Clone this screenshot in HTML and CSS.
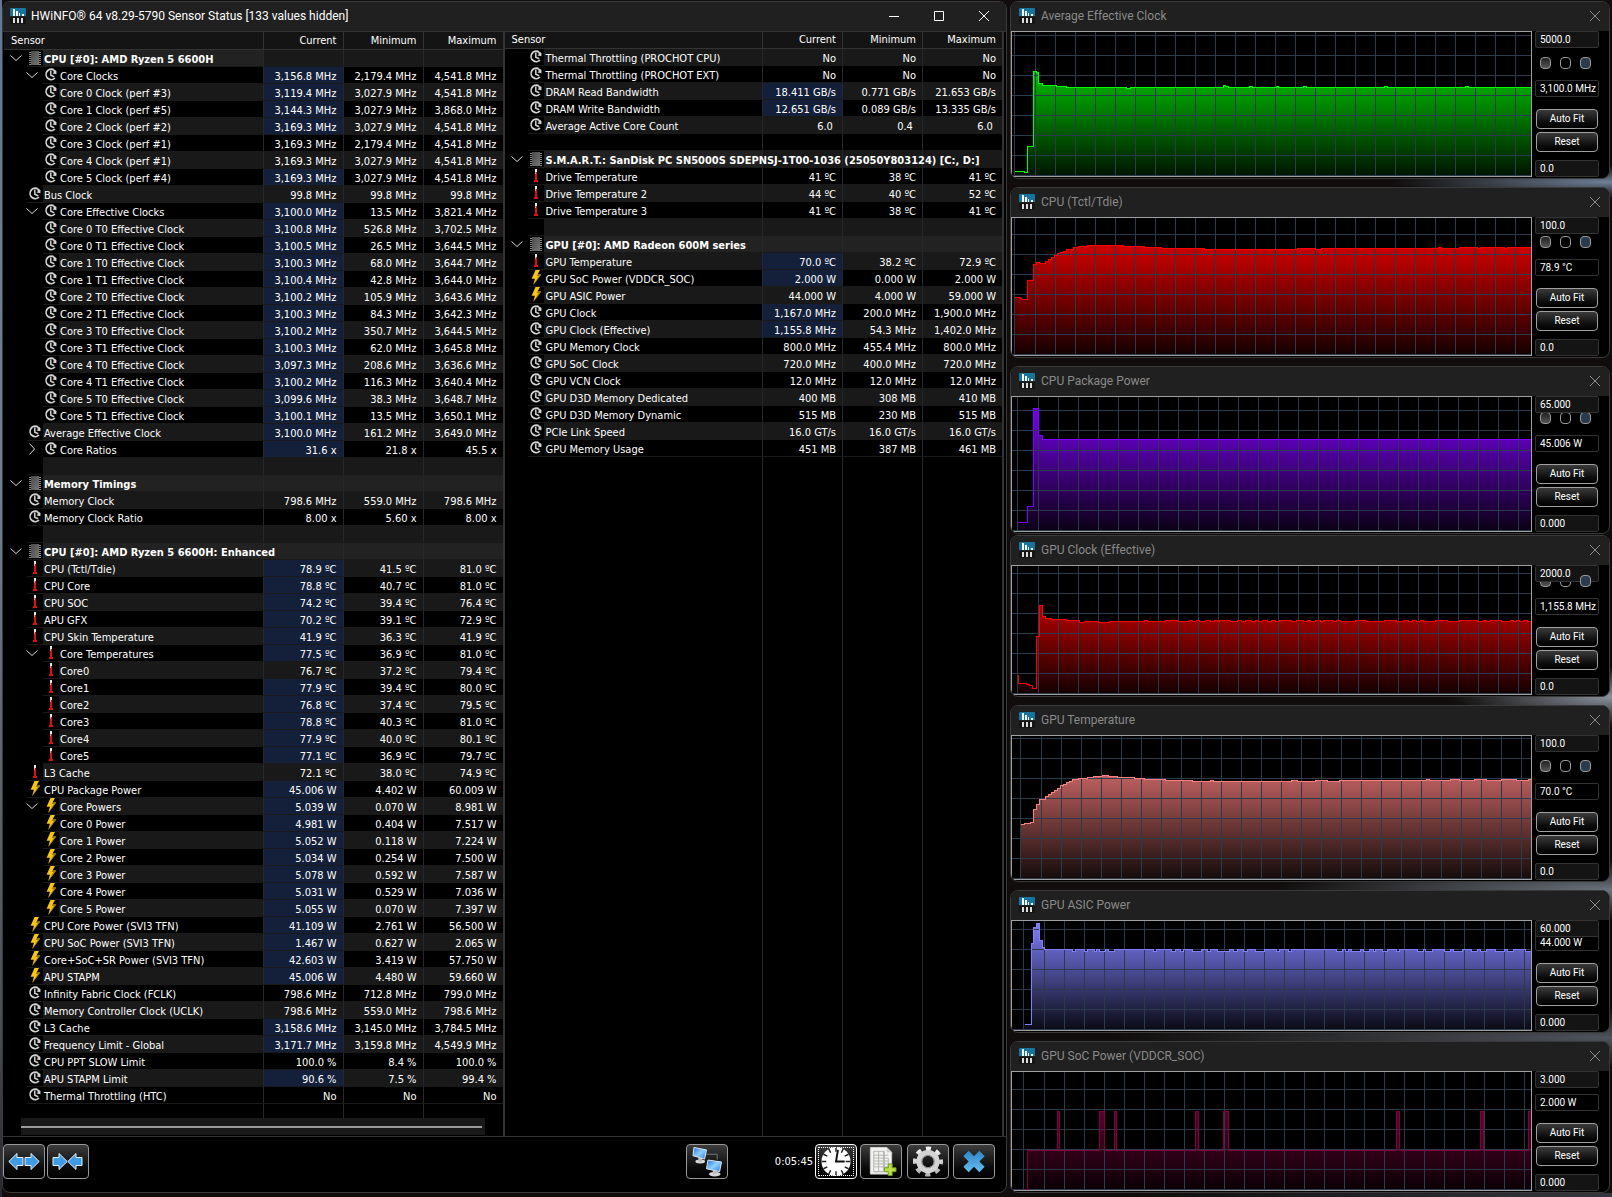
FILE: index.html
```html
<!DOCTYPE html>
<html lang="en">
<head>
<meta charset="utf-8">
<title>HWiNFO® 64 Sensor Status</title>
<link rel="stylesheet" href="styles.css">
</head>
<body>
<svg class="defs" aria-hidden="true">
  <defs>
    <linearGradient id="chipFill" x1="0" x2="1" y1="0" y2="1"><stop offset="0" stop-color="#4a4a4a"/><stop offset="1" stop-color="#757575"/></linearGradient>
    <linearGradient id="screenFill" x1="0" x2="1" y1="0" y2="1"><stop offset="0" stop-color="#1b6fd0"/><stop offset=".5" stop-color="#8fd0ff"/><stop offset="1" stop-color="#1f7fe0"/></linearGradient>
    <linearGradient id="gearFill" x1="0" x2="0" y1="0" y2="1"><stop offset="0" stop-color="#f0f0f0"/><stop offset="1" stop-color="#b4b4b4"/></linearGradient>
    <linearGradient id="crossFill" x1="0" x2="0" y1="0" y2="1"><stop offset="0" stop-color="#2f86c8"/><stop offset="1" stop-color="#66bdf0"/></linearGradient>
  </defs>
  <symbol id="app" viewBox="0 0 16 16">
    <path fill="#17749c" d="M1 0h14a1 1 0 0 1 1 1v7H0V1a1 1 0 0 1 1-1z"/><path fill="#151515" d="M0 9h16v6a1 1 0 0 1-1 1H1a1 1 0 0 1-1-1z"/>
    <path fill="#fff" d="M3 1h2v7H3zM6 3h2v5H6zM9 5h1v3H9zM12 6h2v2h-2z"/><path fill="#ddd" d="M3 10h2v5H3zM7 10h2v5H7zM11 10h2v5h-2z"/>
  </symbol>
  <symbol id="clock" viewBox="0 0 16 16">
    <path fill="none" stroke="#d2d2d2" stroke-width="1.7" d="M10.4 2.6A5.2 5.2 0 1 0 12 11"/><path fill="#d2d2d2" d="M9.3 1.2l4.2 2.9-.1 3.2-3.9-.8 1.3-1.2z"/><path fill="none" stroke="#d2d2d2" stroke-width="1.5" d="M7.8 3.6v4.6l3.4 1.5"/>
  </symbol>
  <symbol id="chip" viewBox="0 0 16 16">
    <path stroke="#8a8a8a" stroke-dasharray="1 1" d="M3.5 2v13M12.5 2v13" stroke-width="3"/><path fill="url(#chipFill)" d="M4 1h8v14H4z"/>
  </symbol>
  <symbol id="temp" viewBox="0 0 16 16">
    <path fill="#e8e8e8" d="M7 1h2v4H7z"/><path fill="#c8a0a0" d="M7 4h1v8H7z"/><path fill="#e01010" d="M8 4h1v8h1v2H6v-2h1V6h1z"/>
  </symbol>
  <symbol id="bolt" viewBox="0 0 16 16">
    <path fill="#f5c518" d="M7.5 0H12L9.6 4.6h3.6L5.2 15l1.7-6.2H3.6z"/><path fill="#a07808" d="M9.6 4.6h3.6L5.2 15l5.5-8.9H8.6z"/>
  </symbol>
  <symbol id="open" viewBox="0 0 12 12"><path fill="none" stroke="#d8d8d8" d="M.5 3.5l5.5 5 5.5-5"/></symbol>
  <symbol id="shut" viewBox="0 0 12 12"><path fill="none" stroke="#d8d8d8" d="M3.5.5l5 5.5-5 5.5"/></symbol>
  <symbol id="cross" viewBox="0 0 12 12"><path fill="none" stroke="currentColor" d="M1 1l10 10M11 1L1 11"/></symbol>
  <symbol id="arrowL" viewBox="0 0 16 20"><path fill="#3f9be6" stroke="#e4f2fc" d="M.8 10L9 2v4h6v8H9v4z"/></symbol>
  <symbol id="arrowR" viewBox="0 0 16 20"><path fill="#3f9be6" stroke="#e4f2fc" d="M15.2 10L7 2v4H1v8h6v4z"/></symbol>
</svg>

<main class="desktop">
  <section class="window status" aria-label="Sensor Status">
    <header class="titlebar">
      <svg class="app-icon"><use href="#app"/></svg>
      <h1 class="title">HWiNFO® 64 v8.29-5790 Sensor Status [133 values hidden]</h1>
      <div class="controls">
        <button class="caption" aria-label="Minimize"><svg viewBox="0 0 12 12"><path stroke="#fff" d="M1 6.5h10"/></svg></button>
        <button class="caption" aria-label="Maximize"><svg viewBox="0 0 12 12"><path fill="none" stroke="#fff" d="M1.5 1.5h9v9h-9z"/></svg></button>
        <button class="caption" aria-label="Close"><svg><use href="#cross"/></svg></button>
      </div>
    </header>
    <div class="panes">
      <div class="pane pane-left">
        <table class="sensors"><thead><tr><th>Sensor</th><th>Current</th><th>Minimum</th><th>Maximum</th></tr></thead><tbody id="left"></tbody></table>
        <div class="scroll"><div class="thumb"></div></div>
      </div>
      <div class="pane pane-right">
        <table class="sensors"><thead><tr><th>Sensor</th><th>Current</th><th>Minimum</th><th>Maximum</th></tr></thead><tbody id="right"></tbody></table>
      </div>
    </div>
    <footer class="toolbar">
      <button class="tool" aria-label="Expand columns"><svg viewBox="0 0 32 20"><use href="#arrowL" width="16" height="20"/><use href="#arrowR" x="16" width="16" height="20"/></svg></button>
      <button class="tool" aria-label="Shrink columns"><svg viewBox="0 0 32 20"><use href="#arrowR" width="16" height="20"/><use href="#arrowL" x="15" width="16" height="20"/></svg></button>
      <button class="tool tool-net" aria-label="Remote monitoring">
        <svg viewBox="0 0 32 32"><path fill="none" stroke="#777" d="M15 8.5h11.5V14"/><ellipse cx="9" cy="16" rx="5" ry="2" fill="#d8d8d8"/><path fill="#bbb" d="M7 12h4v4H7z"/><path fill="url(#screenFill)" stroke="#dfe8f0" d="M2.5 1.5l13 2.500-2 9.500L1.500 10z"/><ellipse cx="24" cy="29" rx="6" ry="2.5" fill="#d8d8d8"/><path fill="#bbb" d="M22 25h4v4h-4z"/><path fill="url(#screenFill)" stroke="#dfe8f0" d="M17 14.500l14 2-2 10-13.500-3z"/></svg>
      </button>
      <span class="elapsed">0:05:45</span>
      <button class="tool tool-focus" aria-label="Reset timer">
        <svg viewBox="0 0 32 32"><circle cx="16" cy="16" r="15" fill="#fff"/><path stroke="#222" stroke-width="1.5" d="M16 1v5M16 26v5M1 16h5M26 16h5M8.5 3l2 4M21.5 25l2 4M3 8.500l4 2M25 21.500l4 2M23.500 3l-2 4M10.500 25l-2 4M29 8.500l-4 2M7 21.500l-4 2"/><path fill="none" stroke="#111" stroke-width="2" d="M18 4l-2 12h9"/></svg>
      </button>
      <button class="tool tool-gap" aria-label="Log to file">
        <svg viewBox="0 0 32 32"><path fill="#f2f2ee" stroke="#ccc" d="M5 1.500h17l5 5V29H5z"/><path fill="#cfcfcf" d="M22 1.500v5h5z"/><path fill="none" stroke="#b5b5b5" d="M8.500 5.500h11v21h-11zM8.500 9.500h15M8.500 12.500h15v14M8.500 15.500h15M8.500 18.500h15M8.500 21.500h15M8.500 26.500h15M13.500 5.500v21M18.500 5.500v21"/><path fill="#b7e04a" stroke="#6f9a1a" d="M23.500 18.500h4v4h4v4h-4v4h-4v-4h-4v-4h4z"/></svg>
      </button>
      <button class="tool tool-wide" aria-label="Settings">
        <svg viewBox="0 0 32 32"><circle cx="16" cy="16" r="13" fill="none" stroke="url(#gearFill)" stroke-width="5" stroke-dasharray="5.1 5.11" stroke-dashoffset="2.5"/><circle cx="16" cy="16" r="9" fill="none" stroke="#d4d4d4" stroke-width="6"/><circle cx="16" cy="16" r="6.5" fill="none" stroke="#8a8a8a"/></svg>
      </button>
      <button class="tool tool-wide" aria-label="Close sensors">
        <svg viewBox="0 0 32 32"><path fill="url(#crossFill)" d="M10.500 5L16 10.500 21.500 5 27 10.500 21.500 16l5.500 5.500-5.500 5.500L16 21.500 10.500 27 5 21.500l5.500-5.500L5 10.500z"/></svg>
      </button>
    </footer>
  </section>
  <div class="graphs" id="graphs"></div>
</main>
<script src="app.js"></script>
</body>
</html>
```
FILE: styles.css
```css
* { box-sizing: border-box; }

body {
  margin: 0;
  min-height: 100vh;
  padding: 1px 2px 4px;
  color: #fff;
  font: 11px/16px "DejaVu Sans Condensed", "DejaVu Sans", sans-serif;
  background:
    linear-gradient(#5d7a98, #6f7f90 40%, #4a4f56 85%, #25282c) left / 2px 100% no-repeat,
    radial-gradient(220px 16px at 100% 182px, #6f8198, transparent) no-repeat,
    radial-gradient(160px 30px at 100% 697px, #8a929c, transparent) no-repeat,
    radial-gradient(340px 30px at 100% 890px, #6b737d, transparent) no-repeat,
    radial-gradient(500px 30px at 100% 1038px, #4e545c, transparent) no-repeat,
    linear-gradient(90deg, transparent 70%, #33373d) bottom / 100% 4px no-repeat,
    #100d0c;
}

.defs { position: absolute; width: 0; height: 0; }
h1, h2 { margin: 0; font: 12px/16px Roboto, sans-serif; }
button { padding: 0; font: inherit; color: inherit; }
svg { display: block; }

.desktop {
  display: grid;
  grid-template-columns: minmax(0, 1005fr) minmax(0, 600fr);
  gap: 3px;
  align-items: start;
}

.window {
  border: 1px solid #3a3a3a;
  border-radius: 8px;
  background: #000;
  overflow: hidden;
}

.titlebar {
  display: flex;
  align-items: center;
  height: 29px;
  padding: 0 0 2px 7px;
  background: #202020;
}
.app-icon { width: 16px; height: 16px; }
.title { margin-left: 5px; flex: 1; white-space: nowrap; }
.controls { display: flex; gap: 33px; padding-right: 16px; }
.caption { width: 12px; height: 12px; border: 0; background: none; }
.caption svg { width: 12px; height: 12px; }

.panes { display: flex; border-top: 1px solid #333; border-bottom: 1px solid #333; }
.pane { display: flex; flex-direction: column; min-width: 0; }
.pane-left {
  flex: 502 1 0;
  padding-left: 1px;
  border-right: 2px solid #333;
}
.pane-right {
  flex: 501 1 0;
  margin-right: 2px;
  border-right: 2px solid #333;
  background: linear-gradient(#23292f, #23292f) right 79px top / 1px 100% no-repeat,
    linear-gradient(#23292f, #23292f) right 159px top / 1px 100% no-repeat,
    linear-gradient(#23292f, #23292f) right 239px top / 1px 100% no-repeat;
}

.sensors { width: 100%; table-layout: fixed; border-collapse: separate; border-spacing: 0; }
.sensors th {
  height: 18px;
  padding: 0 6px;
  font-weight: 400;
  text-align: right;
  background: #141414;
  border-bottom: 1px solid #333;
}
.pane-right th { height: 17px; }
.sensors th + th { width: 80px; border-left: 1px solid #333; }
.sensors th:first-child { padding-left: 7px; text-align: left; }
.sensors td {
  height: 17px;
  padding: 3px 6px 0 0;
  line-height: 13px;
  text-align: right;
  white-space: pre;
  border-left: 1px solid #23292f;
  border-bottom: 1px solid #191919;
}
.sensors td:first-child { padding: 0; text-align: left; border: 0; }
.sensors tr:nth-child(odd) td + td,
.sensors tr:nth-child(odd) .label { background: #191919; }
.sensors .group td + td,
.sensors .group:nth-child(n) .label { background: #222; font-weight: 700; }
.sensors tr:nth-child(n) td.hot { background: #14203a; }

.name { display: flex; height: 17px; padding-left: 5px; }
.level-2 .name { padding-left: 21px; }
.twist { width: 18px; padding: 2px 0 0 1px; }
.twist svg { width: 12px; height: 12px; }
.mark { width: 16px; border-bottom: 1px solid #191919; }
.mark svg { width: 16px; height: 16px; }
.label { flex: 1; min-width: 0; padding: 3px 0 0 1px; white-space: nowrap; border-bottom: 1px solid #191919; }
.pane-right .label { padding-left: 2px; }
.sensors .filler:nth-child(n) td { height: 14px; border-bottom: 0; background: none; }

.scroll { height: 17px; margin: 0 18px 1px 17px; padding: 8px 3px 0 0; background: #191919; }
.thumb { height: 2px; background: #9a9a9a; }

.toolbar { display: flex; align-items: flex-start; height: 55px; padding: 7px 11px 0 0; }
.tool {
  display: grid;
  place-items: center;
  width: 42px;
  height: 35px;
  margin-right: 2px;
  border: 1px solid #999;
  border-radius: 4px;
  background: linear-gradient(#3c3c3c, #0a0a0a 70%, #000);
}
.tool svg { width: 32px; height: 31px; }
.tool-net { margin-left: auto; margin-right: 47px; }
.elapsed { line-height: 36px; margin-right: 2px; }
.tool-focus { border-color: #fff; outline: 1px dotted #fff; outline-offset: -4px; margin-right: 3px; }
.tool-gap { margin-right: 5px; }
.tool-wide { margin-right: 4px; }
.tool-wide:last-child { margin-right: 0; }

.graphs { display: flex; flex-direction: column; gap: 8px; }
.graphs .docked { margin-top: -7px; }
.graphs .titlebar { color: #8a8a8a; padding-left: 8px; padding-right: 8px; }
.graphs .title { margin-left: 6px; }
.graph { display: flex; }
.plot {
  flex: 1;
  min-width: 0;
  margin-bottom: 1px;
  border: 1px solid #a0a0a0;
  overflow: hidden;
}
.plot svg { width: 100%; height: 100%; }
.side {
  position: relative;
  display: flex;
  flex-direction: column;
  justify-content: flex-end;
  width: 77px;
  padding: 0 10px 1px 3px;
  overflow: hidden;
  font: 10px/14px Roboto, sans-serif;
}
.field {
  width: 64px;
  height: 17px;
  flex: none;
  padding: 0 0 0 4px;
  border: 1px solid #333;
  border-radius: 2px;
  background: #141414;
  color: #fff;
  font: inherit;
}
.field-top { position: absolute; top: 0; left: 3px; z-index: 1; }
.field-now { background: #000; margin-bottom: 12px; }
.push {
  flex: none;
  width: 62px;
  height: 20px;
  margin: 0 0 3px 1px;
  border: 1px solid #a0a0a0;
  border-radius: 4px;
  background: linear-gradient(#3a3a3a, #0c0c0c 70%, #000);
}
.push-last { margin-bottom: 8px; }
.swatches { flex: none; display: flex; gap: 9px; padding-left: 5px; margin-bottom: 11px; }
.swatch { width: 11px; height: 12px; border: 1px solid #999; border-radius: 4px; background: #000; }
.swatch-line { background: linear-gradient(#222, #555); }
.swatch-grid { position: relative; background: #2b3b4b; }
.lifted .swatch-grid { z-index: 2; }
```
FILE: app.js
```js
// Each row: level, icon, optional toggle (v open, > closed), optional * when the value just changed.
const LEFT = `0h|CPU [#0]: AMD Ryzen 5 6600H
2cv*|Core Clocks|3,156.8 MHz|2,179.4 MHz|4,541.8 MHz
2c*|Core 0 Clock (perf #3)|3,119.4 MHz|3,027.9 MHz|4,541.8 MHz
2c*|Core 1 Clock (perf #5)|3,144.3 MHz|3,027.9 MHz|3,868.0 MHz
2c*|Core 2 Clock (perf #2)|3,169.3 MHz|3,027.9 MHz|4,541.8 MHz
2c|Core 3 Clock (perf #1)|3,169.3 MHz|2,179.4 MHz|4,541.8 MHz
2c|Core 4 Clock (perf #1)|3,169.3 MHz|3,027.9 MHz|4,541.8 MHz
2c*|Core 5 Clock (perf #4)|3,169.3 MHz|3,027.9 MHz|4,541.8 MHz
1c|Bus Clock|99.8 MHz|99.8 MHz|99.8 MHz
2cv*|Core Effective Clocks|3,100.0 MHz|13.5 MHz|3,821.4 MHz
2c*|Core 0 T0 Effective Clock|3,100.8 MHz|526.8 MHz|3,702.5 MHz
2c*|Core 0 T1 Effective Clock|3,100.5 MHz|26.5 MHz|3,644.5 MHz
2c*|Core 1 T0 Effective Clock|3,100.3 MHz|68.0 MHz|3,644.7 MHz
2c*|Core 1 T1 Effective Clock|3,100.4 MHz|42.8 MHz|3,644.0 MHz
2c*|Core 2 T0 Effective Clock|3,100.2 MHz|105.9 MHz|3,643.6 MHz
2c*|Core 2 T1 Effective Clock|3,100.3 MHz|84.3 MHz|3,642.3 MHz
2c*|Core 3 T0 Effective Clock|3,100.2 MHz|350.7 MHz|3,644.5 MHz
2c*|Core 3 T1 Effective Clock|3,100.3 MHz|62.0 MHz|3,645.8 MHz
2c*|Core 4 T0 Effective Clock|3,097.3 MHz|208.6 MHz|3,636.6 MHz
2c*|Core 4 T1 Effective Clock|3,100.2 MHz|116.3 MHz|3,640.4 MHz
2c*|Core 5 T0 Effective Clock|3,099.6 MHz|38.3 MHz|3,648.7 MHz
2c*|Core 5 T1 Effective Clock|3,100.1 MHz|13.5 MHz|3,650.1 MHz
1c*|Average Effective Clock|3,100.0 MHz|161.2 MHz|3,649.0 MHz
2c>*|Core Ratios|31.6 x|21.8 x|45.5 x

0h|Memory Timings
1c|Memory Clock|798.6 MHz|559.0 MHz|798.6 MHz
1c|Memory Clock Ratio|8.00 x|5.60 x|8.00 x

0h|CPU [#0]: AMD Ryzen 5 6600H: Enhanced
1t*|CPU (Tctl/Tdie)|78.9 ºC|41.5 ºC|81.0 ºC
1t*|CPU Core|78.8 ºC|40.7 ºC|81.0 ºC
1t*|CPU SOC|74.2 ºC|39.4 ºC|76.4 ºC
1t*|APU GFX|70.2 ºC|39.1 ºC|72.9 ºC
1t*|CPU Skin Temperature|41.9 ºC|36.3 ºC|41.9 ºC
2tv*|Core Temperatures|77.5 ºC|36.9 ºC|81.0 ºC
2t|Core0|76.7 ºC|37.2 ºC|79.4 ºC
2t*|Core1|77.9 ºC|39.4 ºC|80.0 ºC
2t*|Core2|76.8 ºC|37.4 ºC|79.5 ºC
2t*|Core3|78.8 ºC|40.3 ºC|81.0 ºC
2t*|Core4|77.9 ºC|40.0 ºC|80.1 ºC
2t*|Core5|77.1 ºC|36.9 ºC|79.7 ºC
1t|L3 Cache|72.1 ºC|38.0 ºC|74.9 ºC
1p*|CPU Package Power|45.006 W|4.402 W|60.009 W
2pv*|Core Powers|5.039 W|0.070 W|8.981 W
2p*|Core 0 Power|4.981 W|0.404 W|7.517 W
2p*|Core 1 Power|5.052 W|0.118 W|7.224 W
2p*|Core 2 Power|5.034 W|0.254 W|7.500 W
2p*|Core 3 Power|5.078 W|0.592 W|7.587 W
2p*|Core 4 Power|5.031 W|0.529 W|7.036 W
2p*|Core 5 Power|5.055 W|0.070 W|7.397 W
1p*|CPU Core Power (SVI3 TFN)|41.109 W|2.761 W|56.500 W
1p*|CPU SoC Power (SVI3 TFN)|1.467 W|0.627 W|2.065 W
1p*|Core+SoC+SR Power (SVI3 TFN)|42.603 W|3.419 W|57.750 W
1p*|APU STAPM|45.006 W|4.480 W|59.660 W
1c|Infinity Fabric Clock (FCLK)|798.6 MHz|712.8 MHz|799.0 MHz
1c|Memory Controller Clock (UCLK)|798.6 MHz|559.0 MHz|798.6 MHz
1c*|L3 Cache|3,158.6 MHz|3,145.0 MHz|3,784.5 MHz
1c*|Frequency Limit - Global|3,171.7 MHz|3,159.8 MHz|4,549.9 MHz
1c|CPU PPT SLOW Limit|100.0 %|8.4 %|100.0 %
1c*|APU STAPM Limit|90.6 %|7.5 %|99.4 %
1c|Thermal Throttling (HTC)|No|No|No`;

const RIGHT = `1c|Thermal Throttling (PROCHOT CPU)|No|No|No
1c|Thermal Throttling (PROCHOT EXT)|No|No|No
1c*|DRAM Read Bandwidth|18.411 GB/s|0.771 GB/s|21.653 GB/s
1c*|DRAM Write Bandwidth|12.651 GB/s|0.089 GB/s|13.335 GB/s
1c|Average Active Core Count|6.0 |0.4 |6.0 

0h|S.M.A.R.T.: SanDisk PC SN5000S SDEPNSJ-1T00-1036 (25050Y803124) [C:, D:]
1t|Drive Temperature|41 ºC|38 ºC|41 ºC
1t|Drive Temperature 2|44 ºC|40 ºC|52 ºC
1t|Drive Temperature 3|41 ºC|38 ºC|41 ºC

0h|GPU [#0]: AMD Radeon 600M series
1t*|GPU Temperature|70.0 ºC|38.2 ºC|72.9 ºC
1p*|GPU SoC Power (VDDCR_SOC)|2.000 W|0.000 W|2.000 W
1p|GPU ASIC Power|44.000 W|4.000 W|59.000 W
1c*|GPU Clock|1,167.0 MHz|200.0 MHz|1,900.0 MHz
1c*|GPU Clock (Effective)|1,155.8 MHz|54.3 MHz|1,402.0 MHz
1c|GPU Memory Clock|800.0 MHz|455.4 MHz|800.0 MHz
1c|GPU SoC Clock|720.0 MHz|400.0 MHz|720.0 MHz
1c|GPU VCN Clock|12.0 MHz|12.0 MHz|12.0 MHz
1c|GPU D3D Memory Dedicated|400 MB|308 MB|410 MB
1c|GPU D3D Memory Dynamic|515 MB|230 MB|515 MB
1c|PCIe Link Speed|16.0 GT/s|16.0 GT/s|16.0 GT/s
1c|GPU Memory Usage|451 MB|387 MB|461 MB`;

const ICONS = { h: 'chip', c: 'clock', t: 'temp', p: 'bolt' };

function row(line) {
  const [code, name = '', ...values] = line.split('|');
  const group = code[0] === '0';
  const toggle = group || code.includes('v') ? 'open' : code.includes('>') ? 'shut' : '';
  const use = id => id ? `<svg><use href="#${id}"/></svg>` : '';
  const cells = [0, 1, 2].map(i =>
    `<td${i === 0 && code.includes('*') ? ' class="hot"' : ''}>${values[i] || ''}</td>`).join('');
  return `<tr class="${group ? 'group' : 'level-' + (code[0] || 1)}"><td><div class="name">` +
    `<span class="twist">${use(toggle)}</span><span class="mark">${use(ICONS[code[1]])}</span>` +
    `<span class="label">${name}</span></div></td>${cells}</tr>`;
}

left.innerHTML = LEFT.split('\n').map(row).join('') +
  '<tr class="filler"><td></td><td></td><td></td><td></td></tr>';
right.innerHTML = RIGHT.split('\n').map(row).join('');

// Builds "x,y" steps for a trace that alternates between two levels at the given x positions.
function toggleSteps(a, b, xs) {
  return xs.map((x, i) => `${x},${i % 2 ? b : a}`).join(' ');
}
const spikes = [46, 48, 88, 93, 103, 105, 184, 187, 212, 217, 385, 388, 469, 472, 517];

const GRAPHS = [
  { name: 'Average Effective Clock', color: '#00ff00', height: 147, top: '5000.0', now: '3,100.0 MHz', low: '0.0', grid: 3,
    data: '3,140 13,141 16,115 22,40 25,41 27,52 31,54 45,55 55,56 115,57 119,56 212,54 214,55 217,56 238,55 241,56 265,55 267,56 292,55 295,56 373,55 376,56 454,55 457,56' },
  { name: 'CPU (Tctl/Tdie)', color: '#ff0000', height: 140, top: '100.0', now: '78.9 °C', low: '0.0', grid: 3,
    data: '3,80 9,81 10,82 16,63 22,47 25,45 28,46 34,44 37,42 40,40 43,38 46,36 49,35 52,34 55,32 62,30 67,29 76,28 112,29 133,30 150,31 193,32 286,31 304,32 310,31 427,30 430,31 448,30 466,31 469,30 493,31 496,30' },
  { name: 'CPU Package Power', color: '#8000ff', height: 137, top: '65.000', now: '45.006 W', low: '0.000', grid: 6,
    data: '6,126 16,110 22,12 27,39 31,43' },
  { name: 'GPU Clock (Effective)', color: '#ff0000', height: 131, top: '2000.0', now: '1,155.8 MHz', low: '0.0', grid: 6, extra: 'docked lifted',
    data: '6,110 7,118 15,119 18,120 21,123 25,71 28,40 31,51 34,53 40,54 55,55 68,57 73,56 87,57 98,56 ' +
      toggleSteps(55, 56, [133, 136, 154, 166, 178, 181, 185, 188, 194, 199, 203, 206, 208, 219, 226, 230, 234, 240, 244, 247, 251, 256, 260, 264, 268, 280, 285, 292, 296, 299, 304, 309, 312, 322, 325, 329, 344, 355, 373, 385, 392, 397, 401, 405, 409, 412, 424, 436, 448, 466, 472, 475, 478, 490, 499, 502, 505, 508, 512, 516]) },
  { name: 'GPU Temperature', color: '#ff8080', height: 146, top: '100.0', now: '70.0 °C', low: '0.0', grid: 9,
    data: '9,89 13,88 19,87 22,74 25,69 28,64 34,61 37,59 40,57 43,55 46,53 49,50 52,49 55,47 58,46 61,44 67,43 76,42 82,41 91,40 97,41 106,42 123,43 133,44 154,45 181,46 199,45 202,46 280,45 286,46 304,45 316,46 328,45 415,44 418,45 439,44 448,45 463,44 475,45 490,44 505,45 517,44' },
  { name: 'GPU ASIC Power', color: '#8080ff', height: 112, top: '60.000', now: '44.000 W', low: '0.000', grid: 12,
    data: '13,104 20,23 22,7 25,3 28,20 31,27 33,29 ' +
      toggleSteps(31, 29, [61, 64, 73, 76, 83, 85, 88, 94, 97, 103, 142, 145, 160, 164, 169, 172, 181, 190, 196, 199, 206, 218, 222, 226, 232, 236, 244, 253, 265, 268, 277, 280, 325, 331, 334, 337, 340, 349, 352, 358, 362, 364, 371, 376, 385, 388, 406, 412, 414, 421, 433, 439, 442, 451, 460, 466, 469, 475, 484, 493, 496, 502, 514]) },
  { name: 'GPU SoC Power (VDDCR_SOC)', color: '#800040', height: 121, top: '3.000', now: '2.000 W', low: '0.000', grid: 12,
    data: '13,118 16,79 ' + toggleSteps(40, 79, spikes) },
];

function plot(g, index) {
  const h = g.height - 3, w = 519;
  const steps = g.data.split(' ').map(p => p.split(',').map(v => v - 1));
  let line = `M${steps[0][0]} ${steps[0][1]}`;
  steps.slice(1).forEach(([x, y]) => { line += `H${x}V${y}`; });
  line += `H${w + 2}`;
  let lines = '';
  for (let y = h - 1; y > 0; y -= 20) lines += `M0 ${y}.5H${w}`;
  const first = g.grid - 1;
  for (let x = 500 + g.grid; x > first + 10; x -= 20) lines += `M${x}.5 0V${h}`;
  lines += `M${first}.5 0V${h}`;
  return `<svg viewBox="0 0 ${w} ${h}" preserveAspectRatio="none" shape-rendering="crispEdges" role="img" aria-label="${g.name} history">
    <linearGradient id="fill${index}" gradientUnits="userSpaceOnUse" x1="0" y1="0" x2="0" y2="${h}">
      <stop offset="0" stop-color="${g.color}"/><stop offset="1" stop-color="${g.color}" stop-opacity=".08"/></linearGradient>
    <path d="${line}V${h}H${steps[0][0]}Z" fill="url(#fill${index})"/>
    <path d="${lines}" fill="none" stroke="#2b3b4b"/>
    <path d="${line}" transform="translate(.5 .5)" fill="none" stroke="${g.color}"/></svg>`;
}

graphs.innerHTML = GRAPHS.map((g, i) => `
  <section class="window ${g.extra || ''}">
    <header class="titlebar"><svg class="app-icon"><use href="#app"/></svg><h2 class="title">${g.name}</h2>
      <button class="caption" aria-label="Close ${g.name}"><svg><use href="#cross"/></svg></button></header>
    <div class="graph" style="height:${g.height}px">
      <div class="plot">${plot(g, i)}</div>
      <div class="side">
        <input class="field field-top" aria-label="Scale maximum" value="${g.top}">
        <div class="swatches"><button class="swatch swatch-line" aria-label="Line color"></button><button class="swatch" aria-label="Background color"></button><button class="swatch swatch-grid" aria-label="Grid color"></button></div>
        <input class="field field-now" aria-label="Current value" readonly value="${g.now}">
        <button class="push">Auto Fit</button>
        <button class="push push-last">Reset</button>
        <input class="field" aria-label="Scale minimum" value="${g.low}">
      </div>
    </div>
  </section>`).join('');
```
